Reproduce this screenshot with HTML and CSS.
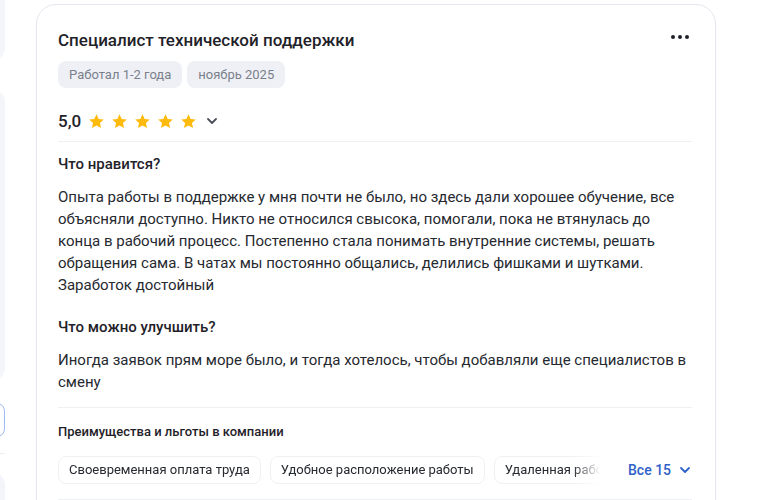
FILE: index.html
```html
<!DOCTYPE html>
<html lang="ru">
<head>
<meta charset="utf-8">
<link rel="stylesheet" href="styles.css">
</head>
<body>
<div class="page">
  <aside class="side">
    <div class="side-panel p1"></div>
    <div class="side-panel p2"></div>
    <div class="side-btn"></div>
    <div class="side-line"></div>
    <div class="side-panel p3"></div>
  </aside>
  <article class="card">
    <header class="head">
      <h1 class="title">Специалист технической поддержки</h1>
      <button class="more" aria-label="Ещё">
        <svg width="18" height="4" viewBox="0 0 18 4"><circle cx="2" cy="2" r="2" fill="#1f2229"/><circle cx="9" cy="2" r="2" fill="#1f2229"/><circle cx="16" cy="2" r="2" fill="#1f2229"/></svg>
      </button>
    </header>
    <div class="tags">
      <span class="tag">Работал 1-2 года</span>
      <span class="tag">ноябрь 2025</span>
    </div>
    <div class="rating">
      <span class="score">5,0</span>
      <span class="stars">
        <svg class="star" viewBox="0 0 24 24"><path d="M12 1.8l3.1 6.6 7.1.8-5.3 4.9 1.5 7.1L12 17.6l-6.4 3.6 1.5-7.1L1.8 9.2l7.1-.8z"/></svg>
        <svg class="star" viewBox="0 0 24 24"><path d="M12 1.8l3.1 6.6 7.1.8-5.3 4.9 1.5 7.1L12 17.6l-6.4 3.6 1.5-7.1L1.8 9.2l7.1-.8z"/></svg>
        <svg class="star" viewBox="0 0 24 24"><path d="M12 1.8l3.1 6.6 7.1.8-5.3 4.9 1.5 7.1L12 17.6l-6.4 3.6 1.5-7.1L1.8 9.2l7.1-.8z"/></svg>
        <svg class="star" viewBox="0 0 24 24"><path d="M12 1.8l3.1 6.6 7.1.8-5.3 4.9 1.5 7.1L12 17.6l-6.4 3.6 1.5-7.1L1.8 9.2l7.1-.8z"/></svg>
        <svg class="star" viewBox="0 0 24 24"><path d="M12 1.8l3.1 6.6 7.1.8-5.3 4.9 1.5 7.1L12 17.6l-6.4 3.6 1.5-7.1L1.8 9.2l7.1-.8z"/></svg>
      </span>
      <svg class="chev" width="12" height="8" viewBox="0 0 12 8"><path d="M2 2l4 4 4-4" fill="none" stroke="#4a4f5a" stroke-width="1.8" stroke-linecap="round" stroke-linejoin="round"/></svg>
    </div>
    <hr class="divider">
    <section class="block">
      <h2 class="q">Что нравится?</h2>
      <p class="text">Опыта работы в поддержке у мня почти не было, но здесь дали хорошее обучение, все объясняли доступно. Никто не относился свысока, помогали, пока не втянулась до конца в рабочий процесс. Постепенно стала понимать внутренние системы, решать обращения сама. В чатах мы постоянно общались, делились фишками и шутками. Заработок достойный</p>
    </section>
    <section class="block">
      <h2 class="q">Что можно улучшить?</h2>
      <p class="text">Иногда заявок прям море было, и тогда хотелось, чтобы добавляли еще специалистов в смену</p>
    </section>
    <hr class="divider d2">
    <section class="perks">
      <h3 class="perks-title">Преимущества и льготы в компании</h3>
      <div class="perks-row">
        <div class="chips">
          <span class="chip">Своевременная оплата труда</span>
          <span class="chip">Удобное расположение работы</span>
          <span class="chip">Удаленная работа</span>
        </div>
        <a class="all">Все 15
          <svg width="12" height="8" viewBox="0 0 12 8"><path d="M2 2l4 4 4-4" fill="none" stroke="#2f62c8" stroke-width="1.8" stroke-linecap="round" stroke-linejoin="round"/></svg>
        </a>
      </div>
    </section>
    <hr class="divider d3">
  </article>
</div>
</body>
</html>
```
FILE: styles.css
```css
* { box-sizing: border-box; }
html, body { margin: 0; background: #fff; }
body {
  font-family: Roboto, "Noto Sans", "Liberation Sans", sans-serif;
  color: #1f2229;
  height: 500px;
  overflow: hidden;
}
.page {
  display: flex;
  gap: 31px;
  align-items: flex-start;
}
.side {
  width: 5px;
  overflow: hidden;
  flex: none;
  display: flex;
  flex-direction: column;
}
.side-panel, .side-btn, .side-line {
  width: 200px;
  margin-left: -195px;
  flex: none;
}
.side-panel {
  background: #f3f5fb;
  border-radius: 12px;
}
.p1 { height: 80px; margin-top: -20px; }
.p2 { height: 290px; margin-top: 30px; }
.side-btn {
  height: 34px;
  margin-top: 23px;
  border: 1px solid #9db8f2;
  border-radius: 8px;
}
.side-line {
  height: 1px;
  background: #eceef3;
  margin-top: 16px;
}
.p3 { height: 80px; margin-top: 19px; }

.card {
  flex: none;
  width: 680px;
  margin-top: 4px;
  border: 1px solid #e4e7ef;
  border-radius: 20px;
  padding: 21px 23px 40px 21px;
}
.head {
  display: flex;
  align-items: center;
  justify-content: space-between;
}
.title {
  margin: 0;
  font-size: 17px;
  font-weight: 500;
  line-height: 28px;
}
.more {
  border: 0;
  background: none;
  padding: 0;
  margin: -6px 3px 0 0;
  display: flex;
}
.tags {
  display: flex;
  gap: 5px;
  margin-top: 7px;
}
.tag {
  background: #eef0f5;
  color: #7a808c;
  font-size: 13px;
  line-height: 17px;
  padding: 5px 11px;
  border-radius: 8px;
}
.rating {
  display: flex;
  align-items: center;
  margin-top: 20px;
  height: 26px;
}
.score {
  font-size: 17px;
  font-weight: 500;
  margin-right: 7px;
}
.stars { display: flex; gap: 6px; }
.star { width: 17px; height: 17px; fill: #ffbb0d; }
.chev { margin-left: 9px; }
.divider {
  border: 0;
  height: 1px;
  background: #eef0f4;
  margin: 7px 0 0;
}
.block { margin-top: 11px; }
.block + .block { margin-top: 20px; }
.q {
  margin: 0;
  font-size: 15px;
  font-weight: 500;
  line-height: 22px;
}
.text {
  margin: 11px 0 0;
  font-size: 15px;
  line-height: 22px;
  color: #26292f;
}
.d2 { margin-top: 14px; }
.perks { margin-top: 14px; }
.perks-title {
  margin: 0;
  font-size: 13px;
  font-weight: 500;
  line-height: 20px;
}
.perks-row {
  display: flex;
  align-items: center;
  margin-top: 14px;
}
.chips {
  display: flex;
  gap: 9px;
  width: 542px;
  overflow: hidden;
  -webkit-mask-image: linear-gradient(to right, #000 515px, transparent 542px);
  mask-image: linear-gradient(to right, #000 515px, transparent 542px);
}
.chip {
  flex: none;
  font-size: 13px;
  line-height: 18px;
  padding: 4px 10px;
  border: 1px solid #eef0f4;
  border-radius: 8px;
  color: #26292f;
}
.all {
  margin-left: 28px;
  display: flex;
  align-items: center;
  gap: 8px;
  color: #2f62c8;
  font-size: 14px;
  font-weight: 500;
}
.d3 { margin-top: 15px; }
```
